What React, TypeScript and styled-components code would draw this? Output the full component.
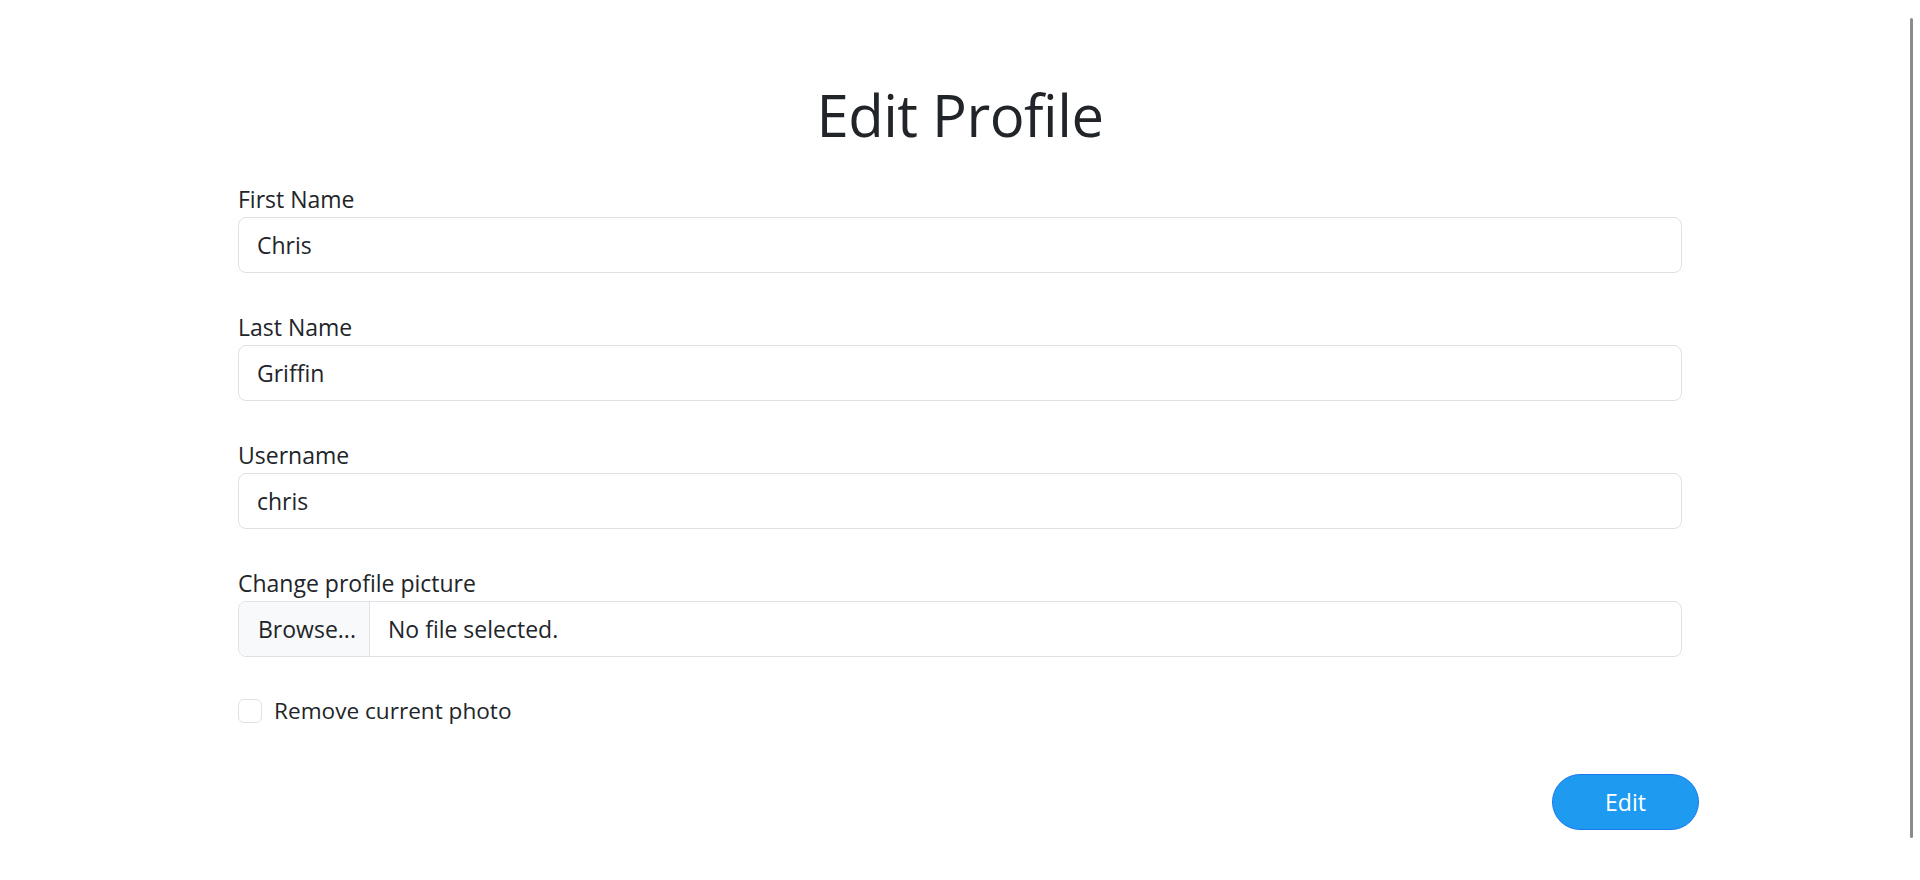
import React from 'react';
import styled, { createGlobalStyle } from 'styled-components';

const GlobalStyle = createGlobalStyle`
  html, body {
    margin: 0;
    padding: 0;
    background: #ffffff;
    overflow: hidden;
  }
  body {
    font-family: 'Open Sans', 'Noto Sans', 'Liberation Sans', sans-serif;
    color: #212529;
  }
  * {
    box-sizing: border-box;
  }
`;

const Page = styled.main`
  width: 1444px;
  margin: 0 auto;
  padding-top: 79px;
`;

const Title = styled.h1`
  margin: 0 0 30px;
  font-size: 58px;
  font-weight: 400;
  line-height: 72px;
  text-align: center;
  letter-spacing: -0.5px;
  color: #212529;
`;

const Form = styled.form`
  display: flex;
  flex-direction: column;
`;

const Group = styled.div`
  display: flex;
  flex-direction: column;
  margin-bottom: 36px;
`;

const Label = styled.label`
  font-size: 23px;
  line-height: 36px;
  color: #212529;
`;

const TextInput = styled.input`
  height: 56px;
  padding: 0 18px;
  font-family: inherit;
  font-size: 23px;
  line-height: 36px;
  color: #212529;
  background: #ffffff;
  border: 1px solid #dee2e6;
  border-radius: 8px;
  outline: none;
`;

const FileField = styled.div`
  display: flex;
  align-items: stretch;
  height: 56px;
  border: 1px solid #dee2e6;
  border-radius: 8px;
  overflow: hidden;
  font-size: 23px;
  line-height: 36px;
`;

const BrowseButton = styled.span`
  display: flex;
  align-items: center;
  width: 131px;
  padding: 0 19px;
  background: #f8f9fa;
  border-right: 1px solid #dee2e6;
  white-space: nowrap;
`;

const FileName = styled.span`
  display: flex;
  align-items: center;
  padding: 0 18px;
`;

const CheckRow = styled.label`
  display: flex;
  align-items: center;
  gap: 12px;
  font-size: 22.6px;
  line-height: 36px;
`;

const CheckBox = styled.input`
  appearance: none;
  margin: 0;
  width: 24px;
  height: 24px;
  border: 1px solid #dee2e6;
  border-radius: 6px;
  background: #ffffff;
`;

const Actions = styled.div`
  display: flex;
  justify-content: flex-end;
  margin-top: 45px;
  margin-right: -17px;
`;

const SubmitButton = styled.button`
  width: 147px;
  height: 56px;
  font-family: inherit;
  font-size: 23px;
  line-height: 36px;
  color: #ffffff;
  background: #1e9bf0;
  border: 1px solid #1a78ee;
  border-radius: 28px;
  cursor: pointer;
`;

const ScrollThumb = styled.div`
  position: fixed;
  top: 18px;
  right: 7px;
  width: 3px;
  height: 820px;
  background: #8c8c8c;
  border-radius: 2px;
`;

const fields = [
  { id: 'first', label: 'First Name', value: 'Chris' },
  { id: 'last', label: 'Last Name', value: 'Griffin' },
  { id: 'username', label: 'Username', value: 'chris' },
];

const App: React.FC = () => {
  return (
    <>
      <GlobalStyle />
      <Page>
        <Title>Edit Profile</Title>
        <Form onSubmit={(e) => e.preventDefault()}>
          {fields.map((f) => (
            <Group key={f.id}>
              <Label htmlFor={f.id}>{f.label}</Label>
              <TextInput id={f.id} type="text" defaultValue={f.value} />
            </Group>
          ))}
          <Group>
            <Label>Change profile picture</Label>
            <FileField>
              <BrowseButton>Browse...</BrowseButton>
              <FileName>No file selected.</FileName>
            </FileField>
          </Group>
          <CheckRow>
            <CheckBox type="checkbox" />
            Remove current photo
          </CheckRow>
          <Actions>
            <SubmitButton type="submit">Edit</SubmitButton>
          </Actions>
        </Form>
      </Page>
      <ScrollThumb />
    </>
  );
};

export default App;
